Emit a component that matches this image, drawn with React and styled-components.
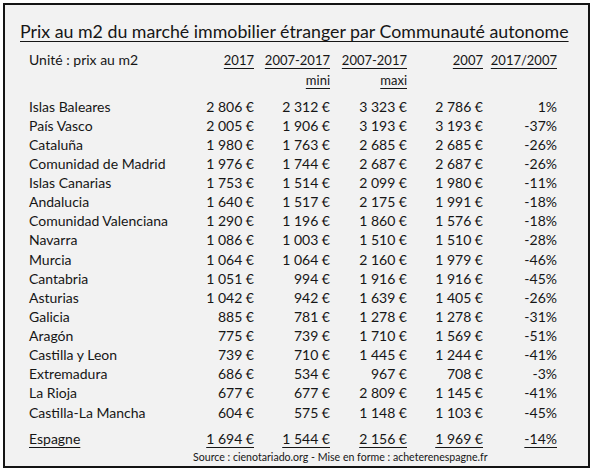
import React from "react";
import styled, { createGlobalStyle } from "styled-components";

const Global = createGlobalStyle`
  html, body { margin: 0; padding: 0; background: #ffffff; }
  body { font-family: "Lato", "Open Sans", sans-serif; color: #161616; }
`;

const Frame = styled.div`
  margin: 3px 0 0 3px;
  width: 583px;
  height: 461px;
  border: 2px solid #141414;
  background: #f2f2f2;
  box-sizing: content-box;
  padding: 0;
  display: flex;
  flex-direction: column;
`;

const Title = styled.h1`
  margin: 15px 0 0 15px;
  font-size: 17.8px;
  font-weight: 400;
  line-height: 22px;
  text-decoration: underline;
  text-decoration-thickness: 1px;
  text-underline-offset: 3px;
  white-space: nowrap;
`;

const Grid = styled.div`
  display: grid;
  grid-template-columns: 155px 70px 76px 77px 76px 74px;
  grid-auto-rows: ${(p) => p.$row}px;
  margin: ${(p) => p.$mt}px 0 0 24px;
  font-size: ${(p) => p.$size}px;
  line-height: ${(p) => p.$row}px;
`;

const Cell = styled.div`
  text-align: ${(p) => (p.$left ? "left" : "right")};
  white-space: nowrap;
  font-size: ${(p) => (p.$big ? "14px" : "inherit")};
  text-decoration: ${(p) => (p.$u ? "underline" : "none")};
  text-decoration-thickness: 1px;
  text-underline-offset: 3px;
`;

const Source = styled.div`
  margin: 0 0 0 188px;
  font-size: 10.6px;
  line-height: 19px;
  white-space: nowrap;
`;

const rows = [
  ["Islas Baleares", "2 806 €", "2 312 €", "3 323 €", "2 786 €", "1%"],
  ["País Vasco", "2 005 €", "1 906 €", "3 193 €", "3 193 €", "-37%"],
  ["Cataluña", "1 980 €", "1 763 €", "2 685 €", "2 685 €", "-26%"],
  ["Comunidad de Madrid", "1 976 €", "1 744 €", "2 687 €", "2 687 €", "-26%"],
  ["Islas Canarias", "1 753 €", "1 514 €", "2 099 €", "1 980 €", "-11%"],
  ["Andalucia", "1 640 €", "1 517 €", "2 175 €", "1 991 €", "-18%"],
  ["Comunidad Valenciana", "1 290 €", "1 196 €", "1 860 €", "1 576 €", "-18%"],
  ["Navarra", "1 086 €", "1 003 €", "1 510 €", "1 510 €", "-28%"],
  ["Murcia", "1 064 €", "1 064 €", "2 160 €", "1 979 €", "-46%"],
  ["Cantabria", "1 051 €", "994 €", "1 916 €", "1 916 €", "-45%"],
  ["Asturias", "1 042 €", "942 €", "1 639 €", "1 405 €", "-26%"],
  ["Galicia", "885 €", "781 €", "1 278 €", "1 278 €", "-31%"],
  ["Aragón", "775 €", "739 €", "1 710 €", "1 569 €", "-51%"],
  ["Castilla y Leon", "739 €", "710 €", "1 445 €", "1 244 €", "-41%"],
  ["Extremadura", "686 €", "534 €", "967 €", "708 €", "-3%"],
  ["La Rioja", "677 €", "677 €", "2 809 €", "1 145 €", "-41%"],
  ["Castilla-La Mancha", "604 €", "575 €", "1 148 €", "1 103 €", "-45%"],
];

const total = ["Espagne", "1 694 €", "1 544 €", "2 156 €", "1 969 €", "-14%"];

export default function App() {
  return (
    <>
      <Global />
      <Frame>
        <Title>Prix au m2 du marché immobilier étranger par Communauté autonome</Title>
        <Grid $row={20} $mt={8} $size={13}>
          <Cell $left $big>Unité : prix au m2</Cell>
          <Cell $u>2017</Cell>
          <Cell $u>2007-2017</Cell>
          <Cell $u>2007-2017</Cell>
          <Cell $u>2007</Cell>
          <Cell $u>2017/2007</Cell>
          <Cell />
          <Cell />
          <Cell $u>mini</Cell>
          <Cell $u>maxi</Cell>
          <Cell />
          <Cell />
        </Grid>
        <Grid $row={19.125} $mt={6.5} $size={14}>
          {rows.map((r) =>
            r.map((v, i) => (
              <Cell key={r[0] + i} $left={i === 0}>
                {v}
              </Cell>
            ))
          )}
        </Grid>
        <Grid $row={19} $mt={7} $size={14}>
          {total.map((v, i) => (
            <Cell key={i} $left={i === 0} $u>
              {v}
            </Cell>
          ))}
        </Grid>
        <Source>Source : cienotariado.org - Mise en forme : acheterenespagne.fr</Source>
      </Frame>
    </>
  );
}
